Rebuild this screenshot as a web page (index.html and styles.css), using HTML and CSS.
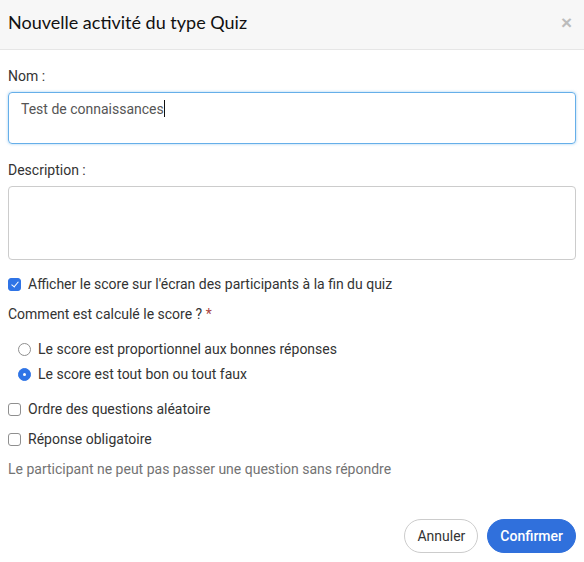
FILE: index.html
```html
<!DOCTYPE html>
<html lang="fr">
<head>
<meta charset="utf-8">
<title>Nouvelle activité du type Quiz</title>
<link rel="stylesheet" href="styles.css">
</head>
<body>
<div class="modal">
  <header class="modal-header">
    <h1 class="modal-title">Nouvelle activité du type Quiz</h1>
    <span class="close">&times;</span>
  </header>
  <div class="modal-body">
    <div class="field">
      <label class="label">Nom :</label>
      <div class="input focused">Test de connaissances<span class="caret"></span></div>
    </div>
    <div class="field last">
      <label class="label">Description :</label>
      <div class="input textarea"></div>
    </div>
    <div class="check-row"><span class="box checked"></span><span>Afficher le score sur l'écran des participants à la fin du quiz</span></div>
    <div class="label score-label">Comment est calculé le score ? <span class="req">*</span></div>
    <div class="radios">
      <div class="radio-row"><span class="radio"></span><span>Le score est proportionnel aux bonnes réponses</span></div>
      <div class="radio-row"><span class="radio checked"></span><span>Le score est tout bon ou tout faux</span></div>
    </div>
    <div class="check-row"><span class="box"></span><span>Ordre des questions aléatoire</span></div>
    <div class="check-row"><span class="box"></span><span>Réponse obligatoire</span></div>
    <p class="help">Le participant ne peut pas passer une question sans répondre</p>
  </div>
  <footer class="modal-footer">
    <button class="btn btn-default">Annuler</button>
    <button class="btn btn-primary">Confirmer</button>
  </footer>
</div>
</body>
</html>
```

FILE: styles.css
```css
html, body {
  margin: 0;
  padding: 0;
  background: #fff;
}
body {
  font-family: Roboto, "Liberation Sans", sans-serif;
  font-size: 14px;
  color: #333;
}
.modal {
  width: 584px;
  height: 562px;
  display: flex;
  flex-direction: column;
}
.modal-header {
  height: 44px;
  background: #f7f7f7;
  border-bottom: 1px solid #e6e6e6;
  display: flex;
  align-items: center;
  justify-content: space-between;
  padding: 0 12px 5px 8px;
  box-sizing: content-box;
  flex: none;
}
.modal-title {
  margin: 0;
  font-family: Lato, "Liberation Sans", sans-serif;
  font-weight: 400;
  font-size: 18px;
  color: #111;
}
.close {
  font-family: "Liberation Sans", sans-serif;
  font-weight: 700;
  font-size: 19px;
  color: #bcbcbc;
  line-height: 1;
}
.modal-body {
  padding: 16px 8px 0 8px;
}
.field {
  margin-bottom: 16px;
}
.field.last {
  margin-bottom: 14px;
}
.label {
  display: block;
  line-height: 20px;
  margin-bottom: 6px;
}
.input {
  box-sizing: border-box;
  height: 52px;
  border: 1px solid #ccc;
  border-radius: 4px;
  padding: 7px 12px;
  color: #555;
  line-height: 18px;
}
.input.focused {
  border-color: #66afe9;
  box-shadow: 0 0 3px rgba(102, 175, 233, 0.6);
}
.caret {
  display: inline-block;
  width: 1px;
  height: 17px;
  background: #111;
  vertical-align: -3px;
}
.textarea {
  height: 74px;
}
.check-row, .radio-row {
  display: flex;
  align-items: center;
  gap: 7px;
  line-height: 20px;
}
.check-row {
  margin-bottom: 10px;
}
.box {
  width: 11px;
  height: 11px;
  border: 1px solid #8f8f8f;
  border-radius: 3px;
  flex: none;
  position: relative;
}
.box.checked {
  background: #2f74e6;
  border-color: #2f74e6;
}
.box.checked::after {
  content: "";
  position: absolute;
  left: 3.5px;
  top: 1px;
  width: 3px;
  height: 6px;
  border: solid #fff;
  border-width: 0 1.6px 1.6px 0;
  transform: rotate(40deg);
}
.score-label {
  margin-bottom: 15px;
}
.req {
  color: #a94442;
}
.radios {
  padding-left: 10px;
  display: flex;
  flex-direction: column;
  gap: 5px;
  margin-bottom: 15px;
}
.radio {
  width: 11px;
  height: 11px;
  border: 1px solid #8f8f8f;
  border-radius: 50%;
  flex: none;
  position: relative;
}
.radio.checked {
  background: #2f74e6;
  border-color: #2f74e6;
}
.radio.checked::after {
  content: "";
  position: absolute;
  left: 4px;
  top: 4px;
  width: 3px;
  height: 3px;
  border-radius: 50%;
  background: #fff;
}
.help {
  margin: 0;
  color: #737373;
  line-height: 20px;
}
.modal-footer {
  margin-top: auto;
  display: flex;
  justify-content: flex-end;
  gap: 9px;
  padding: 0 8px 9px 0;
}
.btn {
  font-family: Roboto, "Liberation Sans", sans-serif;
  font-size: 14px;
  height: 34px;
  border-radius: 17px;
  padding: 0 12px;
  cursor: pointer;
}
.btn-default {
  background: #fff;
  border: 1px solid #ccc;
  color: #333;
}
.btn-primary {
  background: #3070dc;
  border: 1px solid #3070dc;
  color: #fff;
  font-weight: 500;
  padding: 0 12px;
}
```
